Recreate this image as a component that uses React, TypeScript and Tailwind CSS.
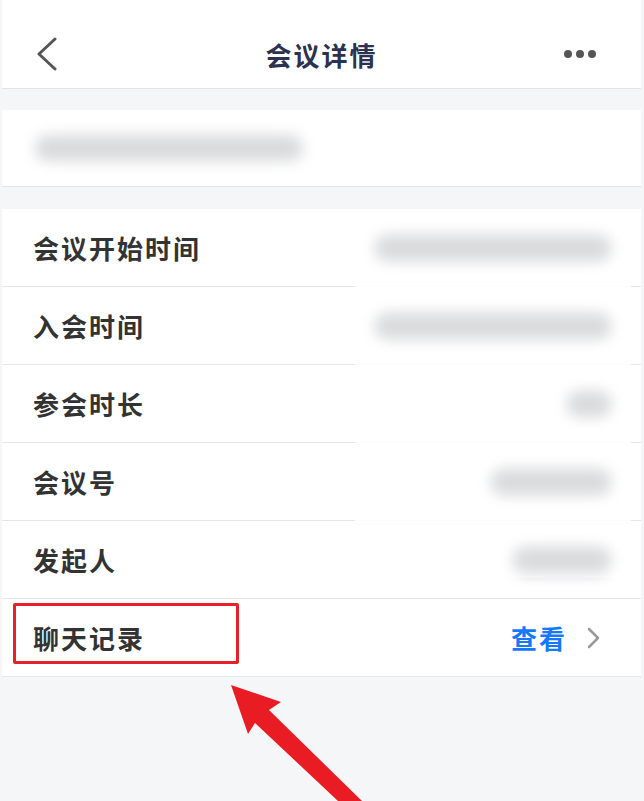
const rows = [
  { label: '会议开始时间', blur: 'w-[236px]' },
  { label: '入会时间', blur: 'w-[236px]' },
  { label: '参会时长', blur: 'w-[44px]' },
  { label: '会议号', blur: 'w-[120px]' },
  { label: '发起人', blur: 'w-[98px]' },
]

function Blur({ className }: { className: string }) {
  return <div className={`h-[26px] rounded-full bg-[#d9dadc] blur-[7px] ${className}`} />
}

export default function App() {
  return (
    <div
      className="relative min-h-[801px] overflow-hidden bg-[#f5f6f8] pl-[2px] pr-[3px]"
      style={{ fontFamily: '"Noto Sans CJK SC", "Noto Sans", sans-serif' }}
    >
      {/* Header */}
      <div className="grid h-[89px] grid-cols-3 items-center border-b border-[#e3e4e7] bg-white px-[34px] pt-[20px]">
        <svg width="22" height="34" viewBox="0 0 22 34" fill="none">
          <polyline points="19,2 3,17 19,32" stroke="#555" strokeWidth="3" strokeLinecap="round" strokeLinejoin="round" />
        </svg>
        <h1 className="text-center text-[26px] font-bold tracking-[2px] text-[#2c3150]">会议详情</h1>
        <div className="flex items-center justify-end gap-[4px] pr-[11px]">
          <span className="h-[8px] w-[8px] rounded-full bg-[#555]" />
          <span className="h-[8px] w-[8px] rounded-full bg-[#555]" />
          <span className="h-[8px] w-[8px] rounded-full bg-[#555]" />
        </div>
      </div>

      {/* Meeting title (hidden) */}
      <div className="mt-[21px] flex h-[77px] items-center border-b border-[#e3e4e7] bg-white pl-[33px]">
        <Blur className="w-[268px]" />
      </div>

      {/* Details list */}
      <div className="relative mt-[22px] bg-white">
        {rows.map((r) => (
          <div key={r.label} className="flex h-[78px] items-center justify-between border-b border-[#e5e5e5] pl-[31px] pr-[30px]">
            <span className="text-[26px] font-bold tracking-[2px] text-[#333]">{r.label}</span>
            <Blur className={r.blur} />
          </div>
        ))}
        {/* white mask over values */}
        <div className="absolute left-[353px] top-[4px] h-[365px] w-[276px] bg-white/90" />
        <div className="absolute left-[373px] top-[26px] flex flex-col gap-[52px]">
          <Blur className="w-[236px]" />
          <Blur className="w-[236px]" />
        </div>
        <div className="absolute right-[30px] top-[182px] flex flex-col items-end gap-[52px]">
          <Blur className="w-[44px]" />
          <Blur className="w-[120px]" />
          <Blur className="w-[98px]" />
        </div>

        <div className="relative flex h-[78px] items-center justify-between border-b border-[#e5e5e5] pl-[31px] pr-[40px]">
          <span className="text-[26px] font-bold tracking-[2px] text-[#333]">聊天记录</span>
          <div className="flex items-center gap-[20px]">
            <span className="text-[26px] font-bold tracking-[2px] text-[#1677ff]">查看</span>
            <svg width="14" height="22" viewBox="0 0 14 22" fill="none">
              <polyline points="2,2 11,11 2,20" stroke="#999" strokeWidth="2.5" strokeLinecap="round" strokeLinejoin="round" />
            </svg>
          </div>
          <div className="absolute left-[11px] top-[4px] h-[61px] w-[226px] rounded-[2px] border-[3px] border-[#e8202a]" />
        </div>
      </div>

      {/* Annotation arrow */}
      <svg className="absolute left-0 top-0" width="644" height="801" viewBox="0 0 644 801">
        <polygon
          points="231,685 281,702 269,710 362,801 338,801 255,723 248,734"
          fill="#e91c24"
        />
      </svg>
    </div>
  )
}
